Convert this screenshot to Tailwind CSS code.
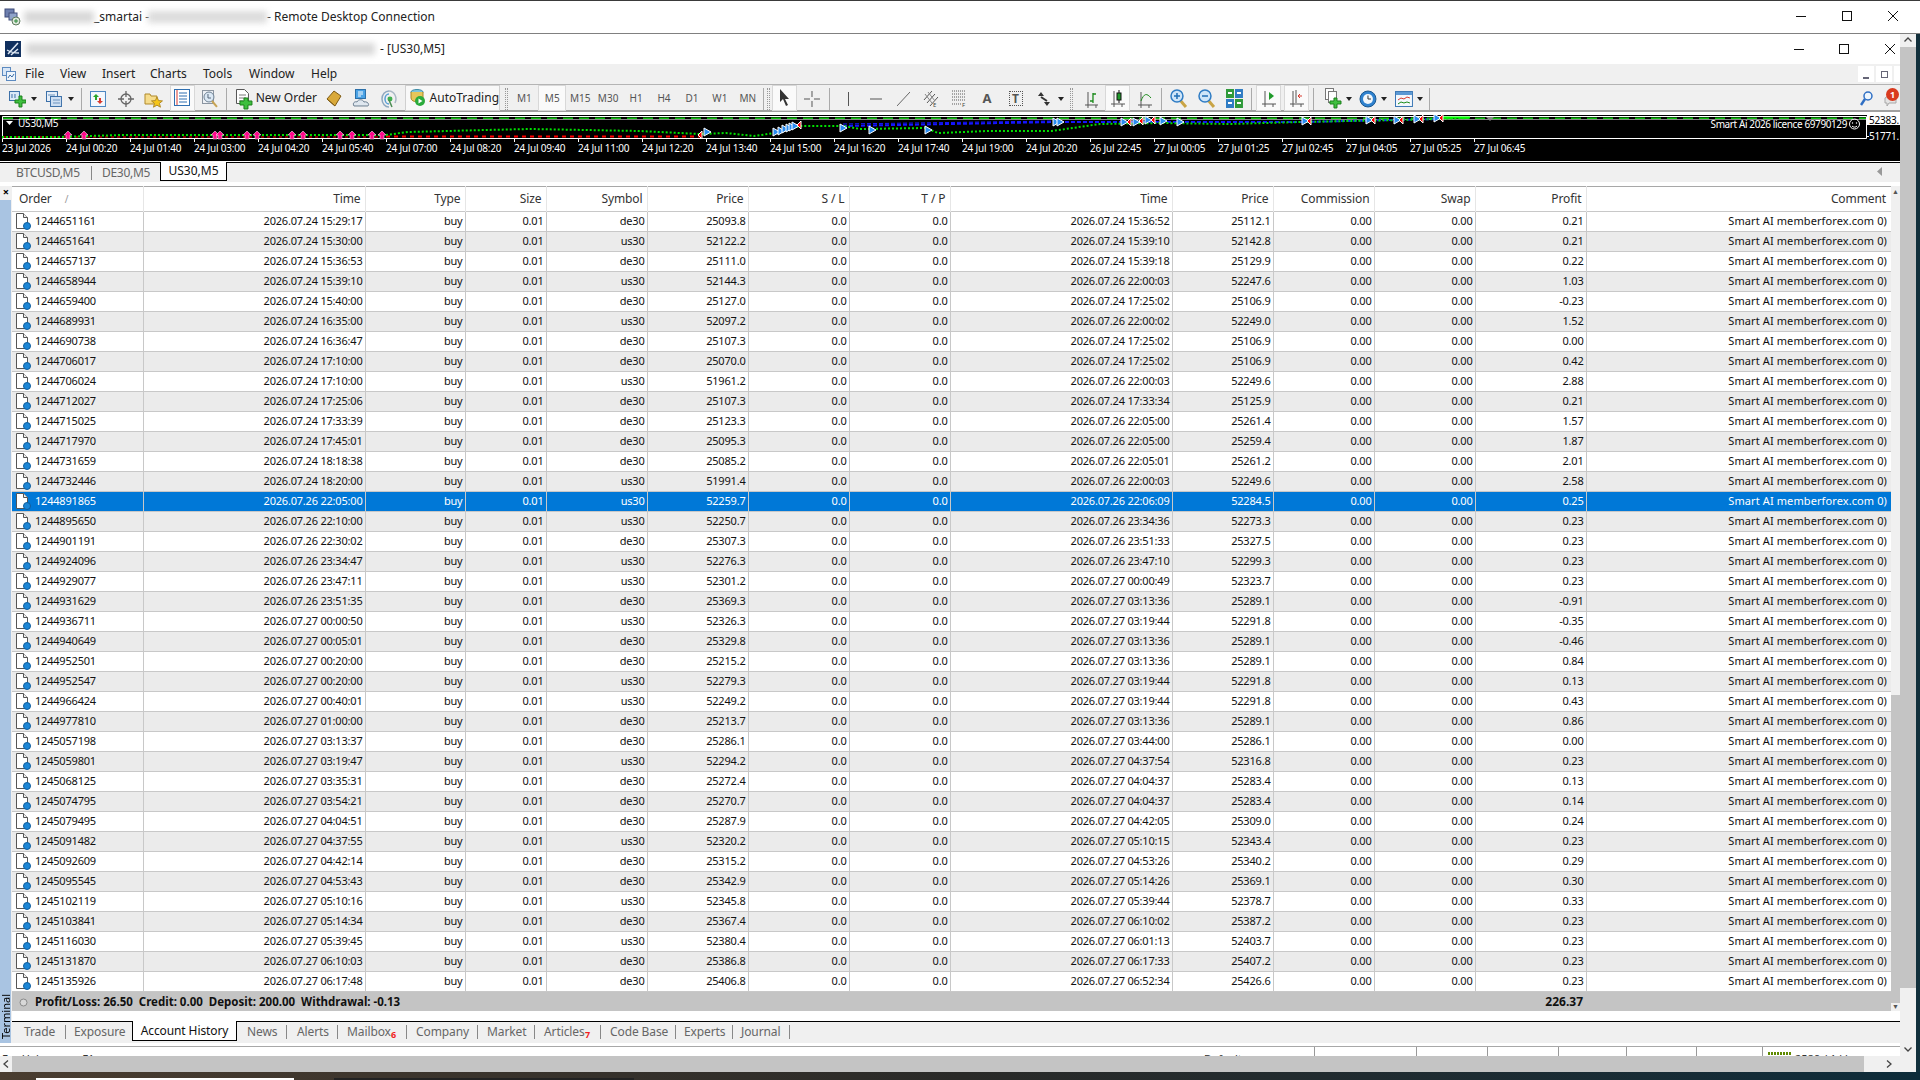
<!DOCTYPE html>
<html lang="en">
<head>
  <meta charset="UTF-8" />
  <title>Remote Desktop Connection</title>
  <script src="https://cdn.jsdelivr.net/npm/@tailwindcss/browser@4"></script>
</head>
<body class="w-[1920px] h-[1080px] overflow-hidden flex flex-col bg-white font-['Noto_Sans',sans-serif] text-[11px] text-[#111]">

  <div class="h-px bg-[#3a3a3a]"></div>

  <!-- Remote desktop title bar -->
  <div class="h-[33px] shrink-0 flex items-center bg-white border-b border-[#808080] text-[12px] text-[#222] relative">
    <svg class="ml-[4px] w-[17px] h-[18px]" viewBox="0 0 17 18"><rect x="1" y="1" width="9" height="8" fill="#6d7fae" stroke="#3c4a78"/><rect x="5" y="5" width="8" height="7" fill="#8fa3c9" stroke="#44507c"/><circle cx="12" cy="13" r="4" fill="#dfe8dc" stroke="#5c7a5c"/><path d="M10 13h4M12 11v4" stroke="#2d8a3a"/></svg>
    <div class="ml-[3px] w-[70px] h-[12px] bg-[#d8d8d8] blur-[3px]"></div>
    <span class="w-[54px] whitespace-nowrap">_smartai -</span>
    <div class="w-[119px] h-[12px] bg-[#dcdcdc] blur-[3px]"></div>
    <span class="whitespace-nowrap">- Remote Desktop Connection</span>
    <div class="ml-auto mr-[4px] flex items-center">
      <svg class="w-[46px] h-[32px]" viewBox="0 0 46 32"><path d="M18 15.500h10" stroke="#111"/></svg>
      <svg class="w-[46px] h-[32px]" viewBox="0 0 46 32"><rect x="18.500" y="10.500" width="9" height="9" fill="none" stroke="#111"/></svg>
      <svg class="w-[46px] h-[32px]" viewBox="0 0 46 32"><path d="M18 10l10 10M28 10L18 20" stroke="#111"/></svg>
    </div>
  </div>

  <div class="flex flex-1 min-h-0">
    <div class="w-[1916px] flex flex-col">
      <div class="flex flex-1 min-h-0">

        <!-- MT4 window -->
        <div class="w-[1900px] flex flex-col">
          <div class="h-[30px] shrink-0 flex items-center text-[12px] text-[#222]">
            <svg class="ml-[5px] w-[16px] h-[16px]" viewBox="0 0 16 16"><rect width="16" height="16" fill="#10305f"/><path d="M3 13L13 2M6 14l7-6M2 9c3 2 6 3 12 3" stroke="#dfe9f5" stroke-width="1.500" fill="none"/></svg>
            <div class="ml-[5px] w-[349px] h-[12px] bg-[#d8d8d8] blur-[3px]"></div>
            <span class="ml-[5px]">- [US30,M5]</span>
            <div class="ml-auto flex items-center">
              <svg class="w-[46px] h-[30px]" viewBox="0 0 46 30"><path d="M11 15.500h10" stroke="#111"/></svg>
              <svg class="w-[46px] h-[30px]" viewBox="0 0 46 30"><rect x="10.500" y="10.500" width="9" height="9" fill="none" stroke="#111"/></svg>
              <svg class="w-[25px] h-[30px]" viewBox="0 0 25 30"><path d="M10 10l10 10M20 10L10 20" stroke="#111"/></svg>
            </div>
          </div>

          <!-- Menu -->
          <div class="h-[20px] shrink-0 bg-[#f0f0f0] flex items-center text-[12px] text-[#222]">
            <svg class="ml-[2px] w-[14px] h-[14px]" viewBox="0 0 14 14"><rect x="0.500" y="0.500" width="8" height="8" fill="#d8e6f6" stroke="#5c8ac0"/><rect x="4.500" y="4.500" width="9" height="9" fill="#eef5fc" stroke="#5c8ac0"/><path d="M6 11l2-3 2 2 2-3" stroke="#3a6ea8" fill="none"/></svg>
            <span class="ml-[9px] w-[35px]">File</span>
            <span class="w-[42px]">View</span>
            <span class="w-[48px]">Insert</span>
            <span class="w-[53px]">Charts</span>
            <span class="w-[46px]">Tools</span>
            <span class="w-[62px]">Window</span>
            <span>Help</span>
            <div class="ml-auto flex items-center gap-[2px]">
              <div class="w-[16px] h-[16px] bg-white flex items-end justify-center"><div class="w-[6px] h-[2px] mb-[3px] bg-[#667]"></div></div>
              <div class="w-[16px] h-[16px] bg-white flex items-center justify-center"><div class="w-[7px] h-[7px] border border-[#667]"></div></div>
              <div class="w-[6px] h-[16px] bg-white"></div>
            </div>
          </div>

          <!-- Toolbar -->
          <div class="h-[28px] shrink-0 pt-[2px] bg-[#f0f0f0] border-t border-[#b4b4b4] border-b-2 border-b-[#a0a0a0] flex items-center text-[#333]">
            <svg class="ml-[8px] w-[18px] h-[18px]" viewBox="0 0 18 18"><rect x="1.500" y="1.500" width="10" height="9" fill="#dce9f7" stroke="#3c70a8"/><path d="M4 4v4M7 4v4" stroke="#3c70a8"/><path d="M11 6h3v4h4v3h-4v4h-3v-4H7v-3h4z" fill="#3fbf3f" stroke="#1b7f1b"/></svg>
            <div class="ml-[5px] w-0 h-0 border-x-[3px] border-x-transparent border-t-[4px] border-t-[#222]"></div>
            <svg class="ml-[8px] w-[18px] h-[18px]" viewBox="0 0 18 18"><rect x="1.500" y="1.500" width="11" height="10" fill="#e6eff9" stroke="#3c70a8"/><rect x="5.500" y="6.500" width="11" height="10" fill="#cfe0f3" stroke="#3c70a8"/><path d="M3 5h7M8 10h7M8 13h7" stroke="#6b93bf"/></svg>
            <div class="ml-[5px] w-0 h-0 border-x-[3px] border-x-transparent border-t-[4px] border-t-[#222]"></div>
            <div class="ml-[7px] w-px h-[22px] bg-[#aaa]"></div>
            <svg class="ml-[8px] w-[16px] h-[18px]" viewBox="0 0 16 18"><rect x="0.500" y="1.500" width="15" height="15" fill="#f4f8fd" stroke="#4b86c2"/><path d="M6 4l3 3H7v3H5V7H3z" fill="#2aa52a"/><path d="M10 14l-3-3h2V8h2v3h2z" fill="#d9382c"/></svg>
            <svg class="ml-[12px] w-[16px] h-[16px]" viewBox="0 0 16 16"><circle cx="8" cy="8" r="5" fill="none" stroke="#666" stroke-width="1.300"/><path d="M8 0v6M8 10v6M0 8h6M10 8h6" stroke="#666" stroke-width="1.300"/></svg>
            <svg class="ml-[10px] w-[19px] h-[18px]" viewBox="0 0 19 18"><path d="M1 4h5l1 2h6v8H1z" fill="#f6dc8c" stroke="#b08a2a"/><path d="M13 7l1.600 3.600 3.900.3-3 2.500 1 3.800-3.500-2-3.500 2 1-3.800-3-2.500 3.900-.3z" fill="#f5c518" stroke="#b08a2a"/></svg>
            <div class="ml-[7px] w-[25px] h-[26px] -mt-[2px] bg-[#fafafa] border border-[#d8d8d8] flex items-center justify-center">
              <svg class="w-[16px] h-[17px]" viewBox="0 0 16 17"><rect x="0.500" y="0.500" width="15" height="16" fill="#fff" stroke="#2f6fb0"/><path d="M3 1v15" stroke="#d9382c"/><path d="M5 4h8M5 7h8M5 10h8M5 13h8" stroke="#2f6fb0"/></svg>
            </div>
            <svg class="ml-[6px] w-[18px] h-[20px]" viewBox="0 0 18 20"><rect x="1.500" y="1.500" width="11" height="13" fill="#eef1f5" stroke="#8a94a0"/><circle cx="8" cy="8" r="5" fill="#dbe8f4" stroke="#6d7f92"/><path d="M7 5v4h3" stroke="#55677a" fill="none"/><path d="M11 12l5 6" stroke="#c7a455" stroke-width="2"/></svg>
            <div class="ml-[7px] w-px h-[22px] bg-[#aaa]"></div>
            <svg class="ml-[8px] w-[18px] h-[22px]" viewBox="0 0 18 22"><path d="M1.500 1.500h8l4 4v10h-12z" fill="#fff" stroke="#555"/><path d="M4 7h7M4 10h7M4 13h4" stroke="#777"/><path d="M9 10h4v3h4v4h-4v4H9v-4H5v-4h4z" fill="#3fbf3f" stroke="#1b7f1b"/></svg>
            <span class="ml-[3px] -mt-[1px] text-[12px] text-[#222] w-[57px] whitespace-nowrap">New Order</span>
            <svg class="ml-[12px] w-[17px] h-[17px]" viewBox="0 0 17 17"><path d="M2 9l7-8 7 5-6 10z" fill="#d9a93a" stroke="#7d5a14"/><path d="M2 9l8 7" stroke="#7d5a14"/></svg>
            <svg class="ml-[10px] w-[18px] h-[19px]" viewBox="0 0 18 19"><rect x="3.500" y="0.500" width="10" height="9" fill="#4ba3e6" stroke="#2a6fa8"/><path d="M6 3h5M6 5h5M6 7h3" stroke="#fff"/><path d="M2 17c-2-3 1-5 3-4 1-3 6-3 7 0 3-1 6 2 4 4z" fill="#dfe7ef" stroke="#6a7d90"/></svg>
            <svg class="ml-[11px] w-[16px] h-[18px]" viewBox="0 0 16 18"><path d="M8 1a7 8 0 0 0 0 16" fill="none" stroke="#8fa8bf" stroke-width="1.500"/><path d="M8 4a4 5 0 0 0 0 10" fill="none" stroke="#5aa0d6" stroke-width="1.500"/><path d="M8 1a7 8 0 0 1 6 12" fill="none" stroke="#a9b8c5" stroke-width="1.500"/><circle cx="9" cy="9" r="2.500" fill="#3fae4f"/><path d="M8 10l3 7" stroke="#4d8c55" stroke-width="1.500"/></svg>
            <div class="ml-[8px] w-[96px] h-[26px] -mt-[2px] bg-[#f8f8f8] border border-[#cfcfcf] flex items-center">
              <svg class="ml-[3px] w-[18px] h-[19px]" viewBox="0 0 18 19"><ellipse cx="8" cy="4" rx="6" ry="2.500" fill="#7fc4dc" stroke="#3d8aa5"/><path d="M2 4v6c0 5 12 5 12 0V4" fill="#e6c65a" stroke="#a5862a"/><circle cx="11" cy="13" r="5" fill="#2bab3c"/><path d="M9.500 10.500v5l4-2.500z" fill="#fff"/></svg>
              <span class="ml-[3px] text-[12px] text-[#222] whitespace-nowrap">AutoTrading</span>
            </div>
            <div class="ml-[5px] w-[3px] h-[22px] border-x border-dotted border-[#999]"></div>
            <div class="w-[2px]"></div>
            <div class="w-[28px] text-center text-[10px] text-[#555]">M1</div>
            <div class="w-[28px] h-[26px] -mt-[2px] leading-[24px] bg-[#fafafa] border border-[#d8d8d8] text-center text-[10px] text-[#555]">M5</div>
            <div class="w-[28px] text-center text-[10px] text-[#555]">M15</div>
            <div class="w-[28px] text-center text-[10px] text-[#555]">M30</div>
            <div class="w-[28px] text-center text-[10px] text-[#555]">H1</div>
            <div class="w-[28px] text-center text-[10px] text-[#555]">H4</div>
            <div class="w-[28px] text-center text-[10px] text-[#555]">D1</div>
            <div class="w-[28px] text-center text-[10px] text-[#555]">W1</div>
            <div class="w-[28px] text-center text-[10px] text-[#555]">MN</div>
            <div class="ml-[1px] w-px h-[22px] bg-[#aaa]"></div>
            <div class="ml-[3px] w-[3px] h-[22px] border-x border-dotted border-[#999]"></div>
            <div class="ml-[2px] w-[25px] h-[26px] -mt-[2px] bg-[#fafafa] border border-[#d8d8d8] flex items-center justify-center">
              <svg class="w-[12px] h-[17px]" viewBox="0 0 12 17"><path d="M2 0v13l3-3 3 7 2-1-3-6h4z" fill="#333"/></svg>
            </div>
            <svg class="ml-[7px] w-[16px] h-[16px]" viewBox="0 0 16 16"><path d="M8 0v6M8 10v6M0 8h6M10 8h6" stroke="#555"/></svg>
            <div class="ml-[9px] w-px h-[22px] bg-[#aaa]"></div>
            <svg class="ml-[18px] w-[1px] h-[14px]" viewBox="0 0 1 14"><path d="M.5 0v14" stroke="#555"/></svg>
            <svg class="ml-[21px] w-[12px] h-[2px]" viewBox="0 0 12 2"><path d="M0 1h12" stroke="#555"/></svg>
            <svg class="ml-[15px] w-[13px] h-[14px]" viewBox="0 0 13 14"><path d="M0 14L13 0" stroke="#666"/></svg>
            <svg class="ml-[13px] w-[16px] h-[19px]" viewBox="0 0 16 19"><path d="M1 11L9 2M4 14l8-9M7 17l8-9" stroke="#555"/><path d="M2 5l7 9M5 3l7 9" stroke="#888"/><text x="10" y="18" font-size="6" fill="#444">E</text></svg>
            <svg class="ml-[13px] w-[15px] h-[19px]" viewBox="0 0 15 19"><path d="M0 2h14M0 5h14M0 8h14M0 11h14M0 15h9" stroke="#555" stroke-dasharray="1 1"/><text x="10" y="18" font-size="6" fill="#444">F</text></svg>
            <span class="ml-[16px] w-[9px] text-[13px] leading-none font-bold text-[#555]">A</span>
            <div class="ml-[17px] w-[14px] h-[15px] border border-dotted border-[#555] text-[12px] leading-[13px] text-center font-bold text-[#555]">T</div>
            <svg class="ml-[14px] w-[14px] h-[14px]" viewBox="0 0 14 14"><path d="M1 4l3-4 3 4zM7 10l3 4 3-4z" fill="#333"/><path d="M4 5l6 4" stroke="#333" stroke-width="2"/></svg>
            <div class="ml-[7px] w-0 h-0 border-x-[3px] border-x-transparent border-t-[4px] border-t-[#222]"></div>
            <div class="ml-[6px] w-[3px] h-[22px] border-x border-dotted border-[#999]"></div>
            <svg class="ml-[12px] w-[14px] h-[18px]" viewBox="0 0 14 18"><path d="M3 2v13M0 15h14M3 15v3M11 15v3" stroke="#555"/><path d="M8 3v10M8 4h3M5 11h3" stroke="#1a8a1a" stroke-width="1.300"/></svg>
            <div class="ml-[7px] w-[25px] h-[26px] -mt-[2px] bg-[#fafafa] border border-[#d8d8d8] flex items-center justify-center">
              <svg class="w-[14px] h-[18px]" viewBox="0 0 14 18"><path d="M3 2v13M0 15h14M3 15v3M11 15v3" stroke="#555"/><path d="M8 1v13" stroke="#111"/><rect x="6" y="4" width="4" height="7" fill="#1f9a2a" stroke="#111"/></svg>
            </div>
            <svg class="ml-[8px] w-[14px] h-[18px]" viewBox="0 0 14 18"><path d="M3 2v13M0 15h14M3 15v3M11 15v3" stroke="#555"/><path d="M3 11c3-8 6-8 10-3" stroke="#1a8a1a" fill="none"/></svg>
            <div class="ml-[9px] w-px h-[22px] bg-[#aaa]"></div>
            <svg class="ml-[8px] w-[18px] h-[19px]" viewBox="0 0 18 19"><path d="M10 11l6 7" stroke="#c9a445" stroke-width="3"/><circle cx="7" cy="7" r="6" fill="#cfe5f8" stroke="#2f7cc4" stroke-width="1.500"/><path d="M4 7h6M7 4v6" stroke="#1f6db5" stroke-width="1.500"/></svg>
            <svg class="ml-[10px] w-[18px] h-[19px]" viewBox="0 0 18 19"><path d="M10 11l6 7" stroke="#c9a445" stroke-width="3"/><circle cx="7" cy="7" r="6" fill="#cfe5f8" stroke="#2f7cc4" stroke-width="1.500"/><path d="M4 7h6" stroke="#1f6db5" stroke-width="1.500"/></svg>
            <svg class="ml-[10px] w-[17px] h-[19px]" viewBox="0 0 17 19"><rect width="8" height="9" fill="#2f9a3a"/><rect x="9" width="8" height="9" fill="#2f7cc4"/><rect y="10" width="8" height="9" fill="#2f7cc4"/><rect x="9" y="10" width="8" height="9" fill="#2f9a3a"/><path d="M2 4h4M11 4h4M2 14h4M11 14h4" stroke="#fff" stroke-width="2"/></svg>
            <div class="ml-[8px] w-px h-[22px] bg-[#aaa]"></div>
            <div class="ml-[4px] w-[25px] h-[26px] -mt-[2px] bg-[#fafafa] border border-[#d8d8d8] flex items-center justify-center">
              <svg class="w-[14px] h-[18px]" viewBox="0 0 14 18"><path d="M3 2v13M0 15h14M3 15v3M11 15v3" stroke="#555"/><path d="M7 3l5 4-5 4z" fill="#1f9a2a"/></svg>
            </div>
            <div class="ml-[3px] w-[25px] h-[26px] -mt-[2px] bg-[#fafafa] border border-[#d8d8d8] flex items-center justify-center">
              <svg class="w-[14px] h-[18px]" viewBox="0 0 14 18"><path d="M3 2v13M0 15h14M3 15v3M11 15v3M6 1v13" stroke="#555"/><path d="M12 7H8M8 7l2-2M8 7l2 2" stroke="#d9382c"/></svg>
            </div>
            <div class="ml-[4px] w-px h-[22px] bg-[#aaa]"></div>
            <svg class="ml-[11px] w-[17px] h-[21px]" viewBox="0 0 17 21"><rect x="0.500" y="0.500" width="8" height="11" fill="#fff" stroke="#777"/><rect x="3.500" y="3.500" width="8" height="11" fill="#fff" stroke="#777"/><path d="M9 10h3v3h4v3h-4v4H9v-4H5v-3h4z" fill="#3fbf3f" stroke="#1b7f1b"/></svg>
            <div class="ml-[4px] w-0 h-0 border-x-[3px] border-x-transparent border-t-[4px] border-t-[#222]"></div>
            <svg class="ml-[7px] w-[18px] h-[18px]" viewBox="0 0 18 18"><circle cx="9" cy="9" r="8" fill="#2f82cf" stroke="#1a568f"/><circle cx="9" cy="9" r="5" fill="#f2f7fb"/><path d="M9 5.500V9h3" stroke="#333" fill="none"/></svg>
            <div class="ml-[4px] w-0 h-0 border-x-[3px] border-x-transparent border-t-[4px] border-t-[#222]"></div>
            <svg class="ml-[8px] w-[18px] h-[16px]" viewBox="0 0 18 16"><rect x="0.500" y="0.500" width="17" height="15" fill="#f3f8fd" stroke="#3c78b5"/><rect x="1" y="1" width="16" height="3" fill="#5a98d4"/><path d="M3 9l3-2 3 1 3-2 3 1" stroke="#d9382c" fill="none"/><path d="M3 13l3-2 3 1 3-1 3 1" stroke="#1a8a1a" fill="none"/></svg>
            <div class="ml-[4px] w-0 h-0 border-x-[3px] border-x-transparent border-t-[4px] border-t-[#222]"></div>
            <div class="ml-[6px] w-px h-[22px] bg-[#aaa]"></div>
            <svg class="ml-[430px] w-[13px] h-[16px]" viewBox="0 0 13 16"><circle cx="8" cy="5" r="4" fill="#eef6fd" stroke="#2f6fc4" stroke-width="1.500"/><path d="M5 8l-4 6" stroke="#2f6fc4" stroke-width="2.500"/></svg>
            <div class="ml-[11px] relative w-[16px] h-[20px]">
              <svg class="w-[16px] h-[20px]" viewBox="0 0 16 20"><path d="M1 9c4-3 8-3 11 0v5H5l-2 3v-3H1z" fill="#e4e4e4" stroke="#a8a8a8"/></svg>
              <div class="absolute left-[2px] top-[-1px] w-[13px] h-[13px] rounded-full bg-[#d93a1e] text-white text-[9px] font-bold leading-[13px] text-center">1</div>
            </div>
          </div>

          <!-- Chart -->
          <div class="h-[3px] shrink-0 bg-white"></div>
          <div id="chart" class="h-[46px] shrink-0 bg-black overflow-hidden"></div>
          <div class="h-px shrink-0 bg-white"></div>
          <div class="h-px shrink-0 bg-black"></div>

          <!-- Chart tabs -->
          <div class="h-[19px] shrink-0 bg-[#f0f0f0] flex items-start text-[12px] text-[#666] relative">
            <span class="ml-[16px] w-[75px] leading-[19px] tracking-[-0.3px]">BTCUSD,M5</span>
            <div class="w-px h-[14px] mt-[3px] bg-[#888]"></div>
            <span class="ml-[10px] w-[58px] leading-[19px] tracking-[-0.3px]">DE30,M5</span>
            <div class="w-[67px] h-[19px] -mt-px bg-white border-x border-b border-black text-[#111] text-center leading-[18px]">US30,M5</div>
            <svg class="absolute right-[18px] top-[4px] w-[5px] h-[9px]" viewBox="0 0 5 9"><path d="M5 0v9L0 4.500z" fill="#999"/></svg>
          </div>
          <div class="h-[4px] shrink-0 bg-white"></div>

          <!-- Terminal -->
          <div class="flex flex-1 min-h-0">
            <div class="w-[12px] shrink-0 flex flex-col bg-[#f0f0f0]">
              <div class="h-[14px] shrink-0 text-[11px] font-bold leading-[10px] text-center text-black pt-[1px]">×</div>
              <div class="h-[843px] w-[11px] bg-[#a9c4e2] flex items-end justify-center">
                <span class="[writing-mode:vertical-rl] rotate-180 text-[11px] leading-[10px] text-black mb-[4px]">Terminal</span>
              </div>
            </div>
            <div class="flex-1 flex flex-col min-w-0">
              <div class="flex h-[825px] shrink-0">
                <div class="w-[1879px] flex flex-col">
                  <table class="table-fixed w-[1879px] border-collapse">
                    <colgroup>
                      <col class="w-[131px]"><col class="w-[222px]"><col class="w-[100px]"><col class="w-[81px]"><col class="w-[101px]"><col class="w-[101px]"><col class="w-[101px]"><col class="w-[101px]"><col class="w-[222px]"><col class="w-[101px]"><col class="w-[101px]"><col class="w-[101px]"><col class="w-[111px]"><col class="w-[305px]">
                    </colgroup>
                    <thead>
                      <tr class="h-[25px] text-[12px] text-[#333] tracking-[-0.1px] border-t border-t-[#a8a8a8] border-b border-b-[#c8c8c8]">
                        <th class="font-normal text-left pl-[7px] border-r border-r-[#e6e6e6]">Order <span class="ml-[10px] text-[10px] text-[#999]">/</span></th>
                        <th class="font-normal text-right pr-[4px] border-r border-r-[#e6e6e6]">Time</th>
                        <th class="font-normal text-right pr-[4px] border-r border-r-[#e6e6e6]">Type</th>
                        <th class="font-normal text-right pr-[4px] border-r border-r-[#e6e6e6]">Size</th>
                        <th class="font-normal text-right pr-[4px] border-r border-r-[#e6e6e6]">Symbol</th>
                        <th class="font-normal text-right pr-[4px] border-r border-r-[#e6e6e6]">Price</th>
                        <th class="font-normal text-right pr-[4px] border-r border-r-[#e6e6e6]">S / L</th>
                        <th class="font-normal text-right pr-[4px] border-r border-r-[#e6e6e6]">T / P</th>
                        <th class="font-normal text-right pr-[4px] border-r border-r-[#e6e6e6]">Time</th>
                        <th class="font-normal text-right pr-[4px] border-r border-r-[#e6e6e6]">Price</th>
                        <th class="font-normal text-right pr-[4px] border-r border-r-[#e6e6e6]">Commission</th>
                        <th class="font-normal text-right pr-[4px] border-r border-r-[#e6e6e6]">Swap</th>
                        <th class="font-normal text-right pr-[4px] border-r border-r-[#e6e6e6]">Profit</th>
                        <th class="font-normal text-right pr-[5px]">Comment</th>
                      </tr>
                    </thead>
                    <tbody id="rows"></tbody>
                  </table>
                  <div class="h-[20px] shrink-0 bg-[#c4c4c4] flex items-center font-bold text-[11.5px] text-[#111]">
                    <svg class="ml-[7px] w-[9px] h-[9px]" viewBox="0 0 9 9"><circle cx="4.500" cy="4.500" r="3.500" fill="#d8d8d8" stroke="#8a8a8a"/></svg>
                    <span class="ml-[7px] whitespace-nowrap">Profit/Loss: 26.50&nbsp;&nbsp;Credit: 0.00&nbsp;&nbsp;Deposit: 200.00&nbsp;&nbsp;Withdrawal: -0.13</span>
                    <span class="ml-auto mr-[308px] text-[12px]">226.37</span>
                  </div>
                </div>
                <div class="w-[9px] flex flex-col bg-[#f0f0f0] items-center">
                  <div class="h-[509px] text-[7px] leading-[12px] text-[#555]">▲</div>
                  <div class="h-[308px] w-full bg-[#c4c4c4]"></div>
                  <div class="text-[7px] leading-[8px] text-[#555]">▼</div>
                </div>
              </div>

              <!-- Terminal tabs -->
              <div class="h-[10px] shrink-0 bg-white"></div>
              <div class="h-[22px] shrink-0 bg-[#f0f0f0] border-t border-black flex items-start text-[12px] tracking-[-0.1px] text-[#666] leading-[19px]">
                <span class="ml-[12px] w-[41px]">Trade</span><div class="w-px h-[14px] mt-[3px] bg-[#888]"></div>
                <span class="ml-[8px] w-[58px]">Exposure</span>
                <div class="w-[105px] h-[20px] -mt-px bg-white border-x border-b border-black text-[#111] text-center leading-[20px]">Account History</div>
                <span class="ml-[10px] w-[39px]">News</span><div class="w-px h-[14px] mt-[3px] bg-[#888]"></div>
                <span class="ml-[10px] w-[40px]">Alerts</span><div class="w-px h-[14px] mt-[3px] bg-[#888]"></div>
                <span class="ml-[9px] w-[42px] whitespace-nowrap">Mailbox</span><span class="ml-[2px] w-[15px] mt-[3px] text-[9px] font-bold text-[#f02020]">6</span><div class="w-px h-[14px] mt-[3px] bg-[#888]"></div>
                <span class="ml-[9px] w-[61px]">Company</span><div class="w-px h-[14px] mt-[3px] bg-[#888]"></div>
                <span class="ml-[9px] w-[47px]">Market</span><div class="w-px h-[14px] mt-[3px] bg-[#888]"></div>
                <span class="ml-[9px] w-[39px] whitespace-nowrap">Articles</span><span class="ml-[2px] w-[15px] mt-[3px] text-[9px] font-bold text-[#f02020]">7</span><div class="w-px h-[14px] mt-[3px] bg-[#888]"></div>
                <span class="ml-[9px] w-[65px] whitespace-nowrap">Code Base</span><div class="w-px h-[14px] mt-[3px] bg-[#888]"></div>
                <span class="ml-[8px] w-[48px]">Experts</span><div class="w-px h-[14px] mt-[3px] bg-[#888]"></div>
                <span class="ml-[8px] w-[48px]">Journal</span><div class="w-px h-[14px] mt-[3px] bg-[#888]"></div>
              </div>
            </div>
          </div>

          <!-- Status bar, clipped by the scrollbar below -->
          <div class="h-[3px] shrink-0 bg-white"></div>
          <div class="h-[10px] shrink-0 border-t border-[#a8a8a8] bg-white overflow-hidden flex items-start relative text-[11px] text-[#333] leading-[14px]">
            <span class="ml-[2px] mt-[5px] w-[1202px]">For Help, press F1</span>
            <span class="mt-[5px] w-[110px]">Default</span>
            <div class="w-px h-[9px] bg-[#999]"></div><div class="ml-[101px] w-px h-[9px] bg-[#999]"></div><div class="ml-[70px] w-px h-[9px] bg-[#999]"></div><div class="ml-[70px] w-px h-[9px] bg-[#999]"></div><div class="ml-[67px] w-px h-[9px] bg-[#999]"></div><div class="ml-[69px] w-px h-[9px] bg-[#999]"></div><div class="ml-[65px] w-px h-[9px] bg-[#999]"></div>
            <div class="ml-[5px] mt-[5px] w-[24px] h-[3px] bg-[repeating-linear-gradient(90deg,#5f8a00_0_2px,transparent_2px_3px)]"></div>
            <span class="ml-[3px] mt-[5px] whitespace-nowrap">2589 / 1 kb</span>
          </div>
        </div>

        <!-- Outer scrollbar -->
        <div class="w-[16px] -mt-[3px] flex flex-col bg-[#f0f0f0] items-center text-[#444]">
          <svg class="mt-[6px] mb-[5px] w-[8px] h-[5px]" viewBox="0 0 8 5"><path d="M0.500 4.500L4 1l3.500 3.500" fill="none" stroke="#444" stroke-width="1.300"/></svg>
          <div class="h-[941px] w-full bg-[#c4c4c4]"></div>
          <svg class="mt-[59px] w-[8px] h-[5px]" viewBox="0 0 8 5"><path d="M0.500 .5L4 4l3.500-3.500" fill="none" stroke="#444" stroke-width="1.300"/></svg>
        </div>
      </div>

      <!-- Outer horizontal scrollbar -->
      <div class="h-[16px] shrink-0 flex bg-[#f0f0f0]">
        <svg class="mx-[3px] mt-[4px] w-[6px] h-[8px]" viewBox="0 0 6 8"><path d="M5 .5L1 4l4 3.500" fill="none" stroke="#444" stroke-width="1.300"/></svg>
        <div class="w-[1852px] bg-[#c4c4c4]"></div>
        <svg class="ml-[22px] mt-[4px] w-[6px] h-[8px]" viewBox="0 0 6 8"><path d="M1 .5L5 4 1 7.500" fill="none" stroke="#444" stroke-width="1.300"/></svg>
      </div>
    </div>
    <div class="w-[4px] bg-[#12303c]"></div>
  </div>

  <!-- Desktop wallpaper under the window -->
  <div class="h-[8px] shrink-0 bg-linear-to-r from-[#4a3d30] via-[#2a2a28] to-[#0d2c3a] flex items-end">
    <div class="ml-[36px] w-[258px] h-[2px] bg-white"></div>
    <div class="ml-[40px] w-[300px] h-[2px] bg-[#222]"></div>
  </div>

  <script>
    // account history rows: order, open time, symbol, open price, close time, close price, profit
    const trades = [
      ["1244651161","2026.07.24 15:29:17","de30","25093.8","2026.07.24 15:36:52","25112.1","0.21"],
      ["1244651641","2026.07.24 15:30:00","us30","52122.2","2026.07.24 15:39:10","52142.8","0.21"],
      ["1244657137","2026.07.24 15:36:53","de30","25111.0","2026.07.24 15:39:18","25129.9","0.22"],
      ["1244658944","2026.07.24 15:39:10","us30","52144.3","2026.07.26 22:00:03","52247.6","1.03"],
      ["1244659400","2026.07.24 15:40:00","de30","25127.0","2026.07.24 17:25:02","25106.9","-0.23"],
      ["1244689931","2026.07.24 16:35:00","us30","52097.2","2026.07.26 22:00:02","52249.0","1.52"],
      ["1244690738","2026.07.24 16:36:47","de30","25107.3","2026.07.24 17:25:02","25106.9","0.00"],
      ["1244706017","2026.07.24 17:10:00","de30","25070.0","2026.07.24 17:25:02","25106.9","0.42"],
      ["1244706024","2026.07.24 17:10:00","us30","51961.2","2026.07.26 22:00:03","52249.6","2.88"],
      ["1244712027","2026.07.24 17:25:06","de30","25107.3","2026.07.24 17:33:34","25125.9","0.21"],
      ["1244715025","2026.07.24 17:33:39","de30","25123.3","2026.07.26 22:05:00","25261.4","1.57"],
      ["1244717970","2026.07.24 17:45:01","de30","25095.3","2026.07.26 22:05:00","25259.4","1.87"],
      ["1244731659","2026.07.24 18:18:38","de30","25085.2","2026.07.26 22:05:01","25261.2","2.01"],
      ["1244732446","2026.07.24 18:20:00","us30","51991.4","2026.07.26 22:00:03","52249.6","2.58"],
      ["1244891865","2026.07.26 22:05:00","us30","52259.7","2026.07.26 22:06:09","52284.5","0.25"],
      ["1244895650","2026.07.26 22:10:00","us30","52250.7","2026.07.26 23:34:36","52273.3","0.23"],
      ["1244901191","2026.07.26 22:30:02","de30","25307.3","2026.07.26 23:51:33","25327.5","0.23"],
      ["1244924096","2026.07.26 23:34:47","us30","52276.3","2026.07.26 23:47:10","52299.3","0.23"],
      ["1244929077","2026.07.26 23:47:11","us30","52301.2","2026.07.27 00:00:49","52323.7","0.23"],
      ["1244931629","2026.07.26 23:51:35","de30","25369.3","2026.07.27 03:13:36","25289.1","-0.91"],
      ["1244936711","2026.07.27 00:00:50","us30","52326.3","2026.07.27 03:19:44","52291.8","-0.35"],
      ["1244940649","2026.07.27 00:05:01","de30","25329.8","2026.07.27 03:13:36","25289.1","-0.46"],
      ["1244952501","2026.07.27 00:20:00","de30","25215.2","2026.07.27 03:13:36","25289.1","0.84"],
      ["1244952547","2026.07.27 00:20:00","us30","52279.3","2026.07.27 03:19:44","52291.8","0.13"],
      ["1244966424","2026.07.27 00:40:01","us30","52249.2","2026.07.27 03:19:44","52291.8","0.43"],
      ["1244977810","2026.07.27 01:00:00","de30","25213.7","2026.07.27 03:13:36","25289.1","0.86"],
      ["1245057198","2026.07.27 03:13:37","de30","25286.1","2026.07.27 03:44:00","25286.1","0.00"],
      ["1245059801","2026.07.27 03:19:47","us30","52294.2","2026.07.27 04:37:54","52316.8","0.23"],
      ["1245068125","2026.07.27 03:35:31","de30","25272.4","2026.07.27 04:04:37","25283.4","0.13"],
      ["1245074795","2026.07.27 03:54:21","de30","25270.7","2026.07.27 04:04:37","25283.4","0.14"],
      ["1245079495","2026.07.27 04:04:51","de30","25287.9","2026.07.27 04:42:05","25309.0","0.24"],
      ["1245091482","2026.07.27 04:37:55","us30","52320.2","2026.07.27 05:10:15","52343.4","0.23"],
      ["1245092609","2026.07.27 04:42:14","de30","25315.2","2026.07.27 04:53:26","25340.2","0.29"],
      ["1245095545","2026.07.27 04:53:43","de30","25342.9","2026.07.27 05:14:26","25369.1","0.30"],
      ["1245102119","2026.07.27 05:10:16","us30","52345.8","2026.07.27 05:39:44","52378.7","0.33"],
      ["1245103841","2026.07.27 05:14:34","de30","25367.4","2026.07.27 06:10:02","25387.2","0.23"],
      ["1245116030","2026.07.27 05:39:45","us30","52380.4","2026.07.27 06:01:13","52403.7","0.23"],
      ["1245131870","2026.07.27 06:10:03","de30","25386.8","2026.07.27 06:17:33","25407.2","0.23"],
      ["1245135926","2026.07.27 06:17:48","de30","25406.8","2026.07.27 06:52:34","25426.6","0.23"]
    ];

    const docIcon = '<svg class="absolute left-[3px] top-[1px] w-[16px] h-[17px]" viewBox="0 0 16 17"><path d="M1.500 .5h7l4 4v11h-11z" fill="#fff" stroke="#555"/><path d="M8.500 .5v4h4" fill="#eee" stroke="#555"/><circle cx="12" cy="13" r="3.500" fill="#1c86d6" stroke="#0f5d9c"/></svg>';
    const cell = "text-right pr-[2px] tracking-[-0.2px] border-r border-r-[#c8c8c8] whitespace-nowrap";

    document.getElementById("rows").innerHTML = trades.map((t, i) => {
      let rowClass = i % 2 ? "bg-[#ebebeb]" : "bg-white";
      if (i === 14) rowClass = "bg-[#0078d7] text-white";
      const vals = [t[1], "buy", "0.01", t[2], t[3], "0.0", "0.0", t[4], t[5], "0.00", "0.00", t[6]];
      return `<tr class="h-[20px] border-b border-b-[#c8c8c8] ${rowClass}">
        <td class="relative pl-[23px] tracking-[-0.2px] border-r border-r-[#c8c8c8]">${docIcon}${t[0]}</td>
        ${vals.map(v => `<td class="${cell}">${v}</td>`).join("")}
        <td class="text-right pr-[4px] tracking-[0.1px] whitespace-nowrap">Smart AI memberforex.com 0)</td>
      </tr>`;
    }).join("");

    // chart strip, coordinates are screen x and y minus the strip top (115)
    const labels = ["23 Jul 2026","24 Jul 00:20","24 Jul 01:40","24 Jul 03:00","24 Jul 04:20","24 Jul 05:40","24 Jul 07:00","24 Jul 08:20","24 Jul 09:40","24 Jul 11:00","24 Jul 12:20","24 Jul 13:40","24 Jul 15:00","24 Jul 16:20","24 Jul 17:40","24 Jul 19:00","24 Jul 20:20","26 Jul 22:45","27 Jul 00:05","27 Jul 01:25","27 Jul 02:45","27 Jul 04:05","27 Jul 05:25","27 Jul 06:45"];
    const pink = [68,84,215,220,247,257,292,303,340,352,372,382];
    const pinkY = 20;
    const blue = [[707,17],[776,17],[781,16],[785,14],[789,13],[792,12],[795,11],[843,13],[872,15],[928,15],[1056,7],[1060,7],[1124,7],[1136,7],[1148,5],[1163,6],[1180,7],[1305,6],[1369,5],[1397,5],[1417,4],[1437,3]];
    const red = [[700,20],[799,10],[1129,7],[1141,6],[1153,5],[1309,6],[1373,5],[1401,5],[1421,4],[1441,3]];
    const green = "2,22 60,22 120,20 386,20 408,17 486,15 530,14 640,16 660,17 700,19 726,18 754,21 775,18 800,11 844,11 860,14 926,13 938,18 987,16 1052,16 1100,9 1160,8 1230,9 1300,7 1400,5 1470,3";

    let svg = '<svg width="1900" height="46" viewBox="0 0 1900 46" font-family="Noto Sans" font-size="10" letter-spacing="-0.2">';
    svg += '<path d="M2.500 1.500H1866.500V23.500H2.500Z" fill="none" stroke="#fff"/>';
    svg += '<path d="M3 3.500H1866" stroke="#0fbf0f" stroke-width="2" stroke-dasharray="10 6"/><path d="M3 4.500H1866" stroke="#888"/>';
    svg += '<path d="M3 22H386" stroke="#f00" stroke-dasharray="3 3"/><path d="M386 21.500H700" stroke="#f00" stroke-width="2" stroke-dasharray="4 4"/>';
    svg += '<path d="M843 11L1056 7L1300 7L1440 4" stroke="#1414ff" stroke-width="2" stroke-dasharray="4 2" fill="none"/><path d="M843 9L1056 6" stroke="#1414ff" stroke-dasharray="4 2" fill="none"/>';
    svg += `<polyline points="${green}" fill="none" stroke="#00e000" stroke-width="2" stroke-dasharray="2 2"/>`;
    svg += '<path d="M1440 2.500H1470" stroke="#00ff00" stroke-width="2"/>';
    pink.forEach(x => { svg += `<path d="M${x} ${pinkY-4}l4 4-2 0 0 4-4 0 0-4-2 0z" fill="#ff0a8c" stroke="#fff" stroke-width=".5"/>`; });
    blue.forEach(p => { svg += `<path d="M${p[0]-3} ${p[1]-4}l7 4-7 4z" fill="#2a8cf0" stroke="#fff"/>`; });
    red.forEach(p => { svg += `<path d="M${p[0]+2} ${p[1]-4}l-4 4 4 4z" fill="#f00" stroke="#fff"/>`; });
    svg += '<path d="M1486 2h8l-4 4z" fill="#888"/>';
    svg += '<path d="M6 6h7l-3.500 4z" fill="#fff"/><text x="18" y="12" fill="#fff">US30,M5</text>';
    svg += '<text x="1847" y="13" fill="#fff" text-anchor="end" letter-spacing="-0.4">Smart Ai 2026 licence 69790129</text>';
    svg += '<circle cx="1854.500" cy="9" r="5" fill="none" stroke="#fff"/><circle cx="1852.500" cy="8" r=".7" fill="#fff"/><circle cx="1856.500" cy="8" r=".7" fill="#fff"/><path d="M1852 11c1 1.500 4 1.500 5 0" stroke="#fff" fill="none"/>';
    svg += '<rect x="1867" y="0" width="33" height="10" fill="#fff"/><text x="1869" y="9" fill="#000">52383.</text>';
    svg += '<path d="M1867 21.500h2" stroke="#fff"/><text x="1869" y="25" fill="#fff">51771.</text>';
    labels.forEach((l, i) => {
      const x = 2 + i * 64;
      svg += `<path d="M${x+.5} 24v3" stroke="#fff"/><text x="${x}" y="37" fill="#fff">${l}</text>`;
    });
    svg += '</svg>';
    document.getElementById("chart").innerHTML = svg;
  </script>
</body>
</html>
